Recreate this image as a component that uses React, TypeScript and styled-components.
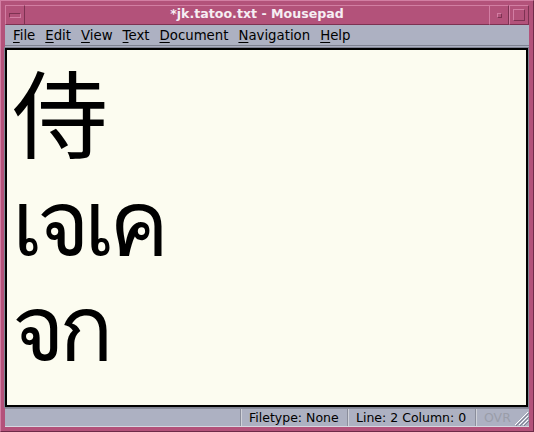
import * as React from "react"
import styled, { createGlobalStyle } from "styled-components"

const GlobalStyle = createGlobalStyle`
  html, body {
    margin: 0;
    padding: 0;
    background: #b3527a;
  }
  * {
    box-sizing: border-box;
  }
`

const menus = ["File", "Edit", "View", "Text", "Document", "Navigation", "Help"]

const App = () => (
  <Window>
    <GlobalStyle />
    <TitleBar>
      <MenuButton>
        <MenuBar />
      </MenuButton>
      <Title>*jk.tatoo.txt - Mousepad</Title>
      <TitleButton>
        <SmallSquare />
      </TitleButton>
      <TitleButton>
        <BigSquare />
      </TitleButton>
    </TitleBar>
    <Client>
      <Menubar>
        {menus.map((m) => (
          <MenuItem key={m}>
            <u>{m[0]}</u>
            {m.slice(1)}
          </MenuItem>
        ))}
      </Menubar>
      <Editor>
        <Line>侍</Line>
        <Line $thai>เจเค</Line>
        <Line $thai>จก</Line>
      </Editor>
      <StatusBar>
        <StatusSpacer />
        <StatusCell $width={107}>Filetype: None</StatusCell>
        <StatusCell $width={128}>Line: 2 Column: 0</StatusCell>
        <StatusCell $width={37} $dim>
          OVR
        </StatusCell>
        <Grip>
          <svg width="17" height="17" viewBox="0 0 17 17">
            <g stroke="#ffffff" strokeWidth="1">
              <line x1="16" y1="3" x2="3" y2="16" />
              <line x1="16" y1="7" x2="7" y2="16" />
              <line x1="16" y1="11" x2="11" y2="16" />
            </g>
            <g stroke="#7d8090" strokeWidth="1">
              <line x1="17" y1="4" x2="4" y2="17" />
              <line x1="17" y1="8" x2="8" y2="17" />
              <line x1="17" y1="12" x2="12" y2="17" />
            </g>
          </svg>
        </Grip>
      </StatusBar>
    </Client>
  </Window>
)

export default App

const Window = styled.div`
  width: 534px;
  height: 432px;
  display: flex;
  flex-direction: column;
  background: #b3527a;
  border-left: 1px solid #d27ea3;
  border-top: 1px solid #d27ea3;
  border-right: 1px solid #6e2a48;
  border-bottom: 1px solid #6e2a48;
  font-family: "DejaVu Sans", sans-serif;
`

const TitleBar = styled.div`
  height: 24px;
  display: flex;
  align-items: stretch;
  padding: 4px 4px 0 4px;
`

const MenuButton = styled.div`
  width: 20px;
  display: flex;
  align-items: center;
  justify-content: center;
  border-top: 1px solid #d27ea3;
  border-left: 1px solid #d27ea3;
  border-right: 1px solid #7d3252;
  border-bottom: 1px solid #7d3252;
`

const MenuBar = styled.div`
  width: 12px;
  height: 5px;
  border-top: 1px solid #7d3252;
  border-left: 1px solid #7d3252;
  border-right: 1px solid #d27ea3;
  border-bottom: 1px solid #d27ea3;
`

const Title = styled.div`
  flex: 1;
  display: flex;
  align-items: center;
  justify-content: center;
  color: #f6eef3;
  font-weight: bold;
  font-size: 12.6px;
  border-top: 1px solid #d27ea3;
  border-bottom: 1px solid #7d3252;
  padding-bottom: 3px;
`

const TitleButton = styled.div`
  width: 20px;
  display: flex;
  align-items: center;
  justify-content: center;
  border-top: 1px solid #d27ea3;
  border-left: 1px solid #d27ea3;
  border-right: 1px solid #7d3252;
  border-bottom: 1px solid #7d3252;
`

const SmallSquare = styled.div`
  width: 5px;
  height: 5px;
  border-top: 1px solid #d27ea3;
  border-left: 1px solid #d27ea3;
  border-right: 1px solid #7d3252;
  border-bottom: 1px solid #7d3252;
`

const BigSquare = styled.div`
  width: 12px;
  height: 12px;
  border-top: 1px solid #d27ea3;
  border-left: 1px solid #d27ea3;
  border-right: 1px solid #7d3252;
  border-bottom: 1px solid #7d3252;
`

const Client = styled.div`
  flex: 1;
  display: flex;
  flex-direction: column;
  margin: 0 4px 4px 4px;
  background: #adb1c2;
`

const Menubar = styled.div`
  height: 21px;
  display: flex;
  align-items: center;
  padding-left: 3px;
  font-size: 13.3px;
  color: #000000;
  border-bottom: 1px solid #7f8291;
`

const MenuItem = styled.span`
  padding: 0 5px;
  u {
    text-decoration-thickness: 1px;
    text-underline-offset: 2px;
  }
`

const Editor = styled.div`
  flex: 1;
  margin: 2px 1px 1px 0;
  border: 2px solid #000000;
  outline: 1px solid #7f8291;
  background: #fcfcf0;
  padding: 7px 0 0 5px;
  font-family: "Noto Sans CJK SC", sans-serif;
  font-size: 96px;
  line-height: 105px;
  color: #000000;
  overflow: hidden;
`

const Line = styled.div<{ $thai?: boolean }>`
  white-space: pre;
  font-size: ${(p) => (p.$thai ? "90px" : "96px")};
  letter-spacing: ${(p) => (p.$thai ? "-6px" : "0")};
  padding-top: ${(p) => (p.$thai ? "2px" : "0")};
  height: 105px;
`

const StatusBar = styled.div`
  height: 19px;
  display: flex;
  align-items: stretch;
  font-size: 12.5px;
  color: #000000;
  border-top: 1px solid #8a8d9b;
  border-bottom: 1px solid #d6d8e0;
`

const StatusSpacer = styled.div`
  flex: 1;
`

const StatusCell = styled.div<{ $width: number; $dim?: boolean }>`
  width: ${(p) => p.$width}px;
  display: flex;
  align-items: center;
  padding-left: 8px;
  border-left: 1px solid #8a8d9b;
  box-shadow: inset 1px 0 #d0d2da;
  color: ${(p) => (p.$dim ? "#9a9da9" : "#000000")};
`

const Grip = styled.div`
  width: 17px;
  display: flex;
  align-items: flex-end;
`
